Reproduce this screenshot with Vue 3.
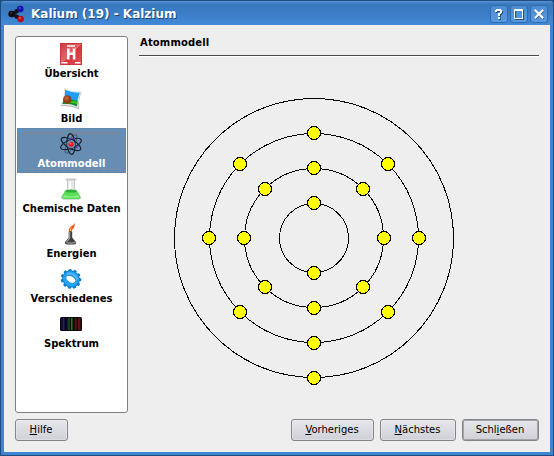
<script setup>
const items = [
  { id: 'overview', label: 'Übersicht' },
  { id: 'picture', label: 'Bild' },
  { id: 'atom', label: 'Atommodell', selected: true },
  { id: 'chem', label: 'Chemische Daten' },
  { id: 'energy', label: 'Energien' },
  { id: 'misc', label: 'Verschiedenes' },
  { id: 'spectrum', label: 'Spektrum' },
]

// electrons per shell, innermost first
const shells = [2, 8, 8, 1]
const orbits = shells.map((_, i) => 35 * (i + 1) - 0.5)
const electrons = shells.flatMap((n, i) =>
  Array.from({ length: n }, (_, k) => {
    const angle = (2 * Math.PI * k) / n
    const r = 35 * (i + 1)
    return {
      x: 140 + Math.round(r * Math.sin(angle)),
      y: 147 + Math.round(r * Math.cos(angle)),
    }
  })
)

const teeth = Array.from({ length: 11 }, (_, k) => (k * 360) / 11)
</script>

<template>
  <div class="window">
    <header class="titlebar">
      <svg class="logo" width="18" height="18" viewBox="0 0 18 18">
        <path d="M4 9L12 5M4 9L12 13" stroke="#101418" stroke-width="2.6" />
        <circle cx="3.600" cy="9" r="3.200" fill="#0c0c0c" />
        <circle cx="8.600" cy="6.200" r="2.200" fill="#111" />
        <circle cx="8.600" cy="11.600" r="2.200" fill="#111" />
        <circle cx="12.300" cy="4" r="3.300" fill="#1512a8" />
        <circle cx="12.600" cy="14" r="3.300" fill="#b80d15" />
        <circle cx="11.700" cy="3" r="1" fill="#5550dd" />
        <circle cx="12" cy="13" r="1" fill="#ee5a60" />
        <circle cx="3.300" cy="8" r=".8" fill="#555" />
      </svg>
      <h1>Kalium (19) - Kalzium</h1>
      <div class="controls">
        <span class="control">
          <svg width="18" height="18" viewBox="0 0 18 18" shape-rendering="crispEdges">
            <path class="glyph-shade" transform="translate(1 1)" d="M5 5h2v2H5zM6 4h5v2H6zM10 5h2v3h-2zM8 8h3v1H8zM8 9h2v2H8zM8 12h2v2H8z" />
            <path class="glyph" d="M5 5h2v2H5zM6 4h5v2H6zM10 5h2v3h-2zM8 8h3v1H8zM8 9h2v2H8zM8 12h2v2H8z" />
          </svg>
        </span>
        <span class="control">
          <svg width="18" height="18" viewBox="0 0 18 18" shape-rendering="crispEdges">
            <path d="M5.500 5.500h8v9h-8z" fill="none" stroke="#234f83" />
            <path d="M4 4h9v2H4zM4 6h1v8H4zM12 6h1v8h-1zM5 13h7v1H5z" class="glyph" />
          </svg>
        </span>
        <span class="control">
          <svg width="18" height="18" viewBox="0 0 18 18">
            <path d="M6 6l7 7M13 6l-7 7" stroke="#234f83" stroke-width="2.2" stroke-linecap="square" />
            <path d="M5.500 5.500l7 7M12.500 5.500l-7 7" stroke="#fff" stroke-width="2.100" stroke-linecap="square" />
          </svg>
        </span>
      </div>
    </header>

    <main class="content">
      <div class="body">
        <nav class="list">
          <div v-for="item in items" :key="item.id" class="item" :class="{ selected: item.selected }">
            <svg class="icon" width="22" height="22" viewBox="0 0 22 22">
              <template v-if="item.id === 'overview'">
                <defs>
                  <linearGradient id="red" x1="0" y1="0" x2="1" y2="1">
                    <stop offset="0" stop-color="#cc3a3e" />
                    <stop offset=".5" stop-color="#e5686b" />
                    <stop offset=".52" stop-color="#d83238" />
                    <stop offset="1" stop-color="#e4555a" />
                  </linearGradient>
                </defs>
                <rect x=".5" y=".5" width="21" height="21" fill="url(#red)" stroke="#cc363b" />
                <path d="M7 2.200h8v1.600H7zM1.500 19h6v1.500h-6zM15 19h5.500v1.500H15zM7 5.500h2.600v4h3.200v-4h2.600v11h-2.600V12H9.600v4.500H7z" fill="#fff" />
              </template>
              <template v-else-if="item.id === 'picture'">
                <path d="M4.500.5Q11 4.500 21.500 4Q18.500 11 18.600 21Q10 17 1 18.300Q5 9 4.500.5z" fill="#a3a6a3" />
                <path d="M4 0Q11 4 21.500 3.300Q18.200 11 18.200 20Q10 16.200.7 17.500Q4.600 8 4 0z" fill="#e3e7e3" />
                <path d="M5 1.800Q12 5 19.800 4.600Q17.200 11 17 18.200Q10 15.200 2.500 16Q5.500 8 5 1.800z" fill="#239dfa" />
                <path d="M3.800 12q7-1 13.500 1l-.3 5.200Q10 15.200 2.500 16z" fill="#128b16" />
                <path d="M9 14.500q4-2.500 8.200-.5l-.2 2z" fill="#35c51e" />
                <circle cx="7.300" cy="11.500" r="4.200" fill="#904019" />
                <circle cx="6.600" cy="10.400" r="2.200" fill="#b9622f" />
              </template>
              <template v-else-if="item.id === 'atom'">
                <g fill="none" stroke="#16202b" stroke-width="1.200">
                  <ellipse cx="11" cy="11" rx="4" ry="10.400" transform="rotate(-4 11 11)" />
                  <ellipse cx="11" cy="11" rx="4.300" ry="11" transform="rotate(-60 11 11)" />
                  <ellipse cx="11" cy="11" rx="4.300" ry="11" transform="rotate(68 11 11)" />
                  <ellipse cx="11" cy="11" rx="3.500" ry="10.500" transform="rotate(30 11 11)" stroke-width=".7" opacity=".6" />
                </g>
                <circle cx="11" cy="11.200" r="4" fill="#678db2" />
                <circle cx="11" cy="11.200" r="2.500" fill="#f01515" />
                <circle cx="10.400" cy="10.500" r=".9" fill="#ff7770" />
                <path d="M9 5h2v1.500H9zM13.500 5H15v1.500h-1.500zM15.500 13.500h2V15h-2z" fill="#7c20c8" />
              </template>
              <template v-else-if="item.id === 'chem'">
                <path d="M7.500 1.500v9L1.600 19q-.5 2 2 2.200h15q2.500-.2 1.800-2.200L14.500 10V1.500" fill="#e6e8e8" stroke="#b9bebe" stroke-width=".8" />
                <path d="M5 12.500h12l3.500 6.500q.3 2-2.500 2H4Q1.500 20.500 2 18.500z" fill="#58dd58" />
                <ellipse cx="11" cy="13" rx="5.500" ry="1.600" fill="#30b03b" />
                <path d="M4 17q6 2.500 14 0l1 2.500H3z" fill="#8aef86" />
                <path d="M9 3h2v8H9z" fill="#fff" />
                <rect x="5.500" y=".5" width="11" height="2" rx="1" fill="#c7caca" />
              </template>
              <template v-else-if="item.id === 'energy'">
                <path d="M9 9Q8 5.500 11 3.500 13.800 2 14.500 0 15.300 4 12.700 6q-1 1-1 3z" fill="#f05a18" />
                <path d="M10 8q-.8-2.500 1.500-4-.3 2-.7 4z" fill="#ffc06a" />
                <path d="M8.700 8.500h3.500v6l3.800 4.700q.6 2-2 2.300H7q-2.500-.3-2-2.300l3.700-4.700z" fill="#404040" />
                <path d="M9.200 9h1v6l-2.300 3.500H6.700l2.500-4z" fill="#aaa" />
                <path d="M6.200 18.500q4.500 1.500 9 0l.5 1.500q-5 1.800-10 0z" fill="#858585" />
              </template>
              <template v-else-if="item.id === 'misc'">
                <g transform="rotate(28 11 11) translate(11 11) scale(1 .94)">
                  <rect v-for="a in teeth" :key="a" x="-1.600" y="-10.400" width="3.200" height="4" rx=".8" fill="#087bc9" :transform="`rotate(${a})`" />
                  <circle r="8.900" fill="#087bc9" />
                  <circle r="8.100" fill="#26a3f5" />
                  <path d="M-6.500-4Q0-9 6.500-4L5 0H-5z" fill="#4db6fa" />
                  <ellipse rx="5.600" ry="3.900" fill="#1686d0" />
                  <ellipse cy=".4" rx="5" ry="3.200" fill="#fff" />
                </g>
              </template>
              <template v-else>
                <rect x="0" y="4" width="22" height="14" rx="1.500" fill="#090909" />
                <path d="M1 5h2v12H1z" fill="#100c3f" />
                <path d="M3 5h1.500v12H3z" fill="#221a8e" />
                <path d="M7 5h3v12H7z" fill="#0a2c12" />
                <path d="M8.500 5h1v12h-1z" fill="#17541a" />
                <path d="M11 5h1.500v12H11z" fill="#456c11" />
                <path d="M14.500 5H17v12h-2.500z" fill="#3c180c" />
                <path d="M18 5h2.500v12H18z" fill="#621016" />
              </template>
            </svg>
            <span class="label">{{ item.label }}</span>
          </div>
        </nav>

        <section class="page">
          <h2>Atommodell</h2>
          <svg class="model" width="280" height="296" viewBox="0 0 280 296" shape-rendering="crispEdges">
            <circle v-for="r in orbits" :key="r" cx="140" cy="147" :r="r" class="orbit" />
            <circle v-for="(e, i) in electrons" :key="i" :cx="e.x" :cy="e.y" r="6.500" class="electron" />
          </svg>
        </section>
      </div>

      <footer class="buttons">
        <button class="help"><span><u>H</u>ilfe</span></button>
        <button class="previous"><span><u>V</u>orheriges</span></button>
        <button class="next"><span><u>N</u>ächstes</span></button>
        <button class="close"><span>Schl<u>i</u>eßen</span></button>
      </footer>
    </main>
  </div>
</template>

<style>
body {
  margin: 0;
  background: #1d4a7c;
}
</style>

<style scoped>
.window {
  box-sizing: border-box;
  width: 554px;
  height: 456px;
  padding: 0 3px 3px;
  display: flex;
  flex-direction: column;
  font-family: "DejaVu Sans", sans-serif;
  font-size: 10px;
  color: #000;
  background: #3d85d3;
  border: 1px solid #1f4c80;
  border-radius: 4px 4px 0 0;
}
.titlebar {
  height: 24px;
  flex: none;
  display: flex;
  align-items: center;
  margin: 0 -3px;
  padding: 0 5px 0 7px;
  border-radius: 3px 3px 0 0;
  background: linear-gradient(#5794d8 0, #3a78bd 3px, #3a7cc4 12px, #428ad7);
}
.logo {
  margin-top: 1px;
}
h1 {
  flex: 1;
  margin: 2px 0 0 5px;
  font-size: 12px;
  line-height: 18px;
  color: #fff;
  text-shadow: 1px 1px 0 #1f4877;
  white-space: nowrap;
}
.controls {
  display: flex;
  gap: 2px;
  margin-top: 1px;
}
.control {
  box-sizing: border-box;
  width: 18px;
  height: 18px;
  border-radius: 3px;
  background: linear-gradient(#4d8bd0, #5a9ae0);
  box-shadow: inset 0 0 0 1px #2f6bae;
}
.control svg {
  display: block;
}
.glyph {
  fill: #fff;
}
.glyph-shade {
  fill: #234f83;
}
.content {
  flex: 1;
  background: #eee;
  padding: 11px 11px 0;
}
.body {
  display: flex;
  gap: 11px;
}
.list {
  box-sizing: border-box;
  flex: none;
  width: 113px;
  height: 377px;
  padding: 1px 0 0;
  border: 1px solid #808080;
  border-radius: 3px;
  background: #fff;
}
.item {
  box-sizing: border-box;
  height: 45px;
  margin: 0 1px;
  padding: 5px 1px 0 0;
  display: flex;
  flex-direction: column;
  align-items: center;
}
.item.selected {
  background: #678db2;
  color: #fff;
  outline: 1px dotted #9a7458;
  outline-offset: -1px;
}
.icon {
  flex: none;
}
.label {
  font-weight: bold;
  line-height: 12px;
  margin: 3px 0 0 1px;
  white-space: nowrap;
}
.page {
  flex: 1;
  display: flex;
  flex-direction: column;
}
h2 {
  margin: 0;
  padding: 1px 0 0 1px;
  height: 18px;
  font-size: 10px;
  letter-spacing: 0.15px;
  line-height: 12px;
  border-bottom: 1px solid #484848;
  box-shadow: 0 1px #fff;
}
.model {
  display: block;
  margin: 35px 0 0 35px;
}
.orbit {
  fill: none;
  stroke: #000;
}
.electron {
  fill: #ff0;
  stroke: #000;
}
.buttons {
  display: flex;
  gap: 6px;
  margin-top: 6px;
}
button {
  box-sizing: border-box;
  height: 22px;
  padding: 0 1px 1px 0;
  border: 1px solid #858589;
  border-radius: 3px;
  background: linear-gradient(#e6e7eb, #d0d1d8);
  box-shadow: inset 0 0 0 1px #ffffff45;
  font: 10px/14px "DejaVu Sans", sans-serif;
  color: #000;
}
u {
  text-underline-offset: 1px;
}
.help {
  width: 53px;
  margin-right: auto;
}
.previous {
  width: 83px;
}
.next {
  width: 76px;
}
.close {
  width: 77px;
  box-shadow: inset 0 0 0 1px #a3a4aa;
}
</style>
